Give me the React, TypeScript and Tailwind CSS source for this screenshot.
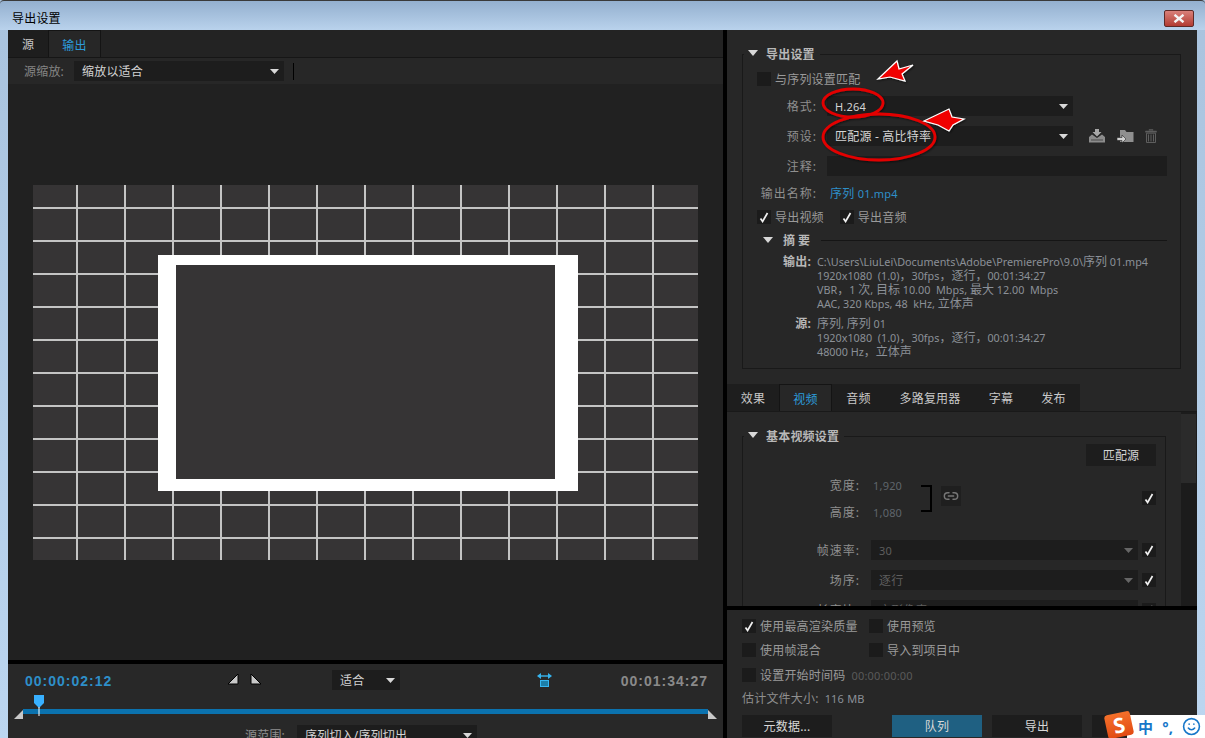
import { Link2, Smile } from 'lucide-react'
import type { ReactNode } from 'react'

const VERTICALS = [77, 125, 173, 221, 269, 317, 365, 413, 461, 509, 557, 605, 653]
const HORIZONTALS = [208, 241, 274, 307, 340, 373, 406, 439, 472, 505, 538]
const COMMA = '\uff0c'

function Caret({ dim = false }: { dim?: boolean }) {
  return (
    <svg width="9" height="5" viewBox="0 0 9 5" className="shrink-0">
      <polygon points="0,0 9,0 4.5,5" fill={dim ? '#666666' : '#d8d8d8'} />
    </svg>
  )
}

function Check({ on = false }: { on?: boolean }) {
  return (
    <div className="flex h-[14px] w-[14px] shrink-0 items-center justify-center bg-[#1b1b1b]">
      {on && (
        <svg width="10" height="11" viewBox="0 0 10 11">
          <path d="M1.5 6.5 L3.6 9.5 L8.5 1" fill="none" stroke="#f0f0f0" strokeWidth="1.7" />
        </svg>
      )}
    </div>
  )
}

function CheckLabel({ on, children, className = '' }: { on?: boolean; children: ReactNode; className?: string }) {
  return (
    <div className={`flex h-[14px] items-center ${className}`}>
      <Check on={on} />
      <span className="ml-[4px] whitespace-nowrap text-[#9a9a9a]">{children}</span>
    </div>
  )
}

function Select({ text, className, dim = false, small = false }: { text: string; className: string; dim?: boolean; small?: boolean }) {
  return (
    <div className={`flex h-5 items-center justify-between bg-[#1d1d1d] pl-[8px] pr-[5px] ${className}`}>
      <span className={`whitespace-nowrap ${small ? 'text-[11px]' : ''} ${dim ? 'text-[#5e5e5e]' : 'text-[#d4d4d4]'}`}>{text}</span>
      <Caret dim={dim} />
    </div>
  )
}

function FieldRow({ label, children }: { label: string; children: ReactNode }) {
  return (
    <div className="mt-[10px] flex items-center">
      <span className="w-[74px] whitespace-nowrap text-right tracking-[1px] text-[#8f8f8f]">{label}</span>
      <div className="ml-[10px] flex items-center">{children}</div>
    </div>
  )
}

function SectionTitle({ text }: { text: string }) {
  return (
    <div className="-mt-[10px] ml-[1px] flex h-[18px] w-fit items-center bg-[#272727] pl-[4px] pr-[5px]">
      <svg width="10" height="6" viewBox="0 0 10 6" className="-mt-[3px]">
        <polygon points="0,0 10,0 5,6" fill="#d8d8d8" />
      </svg>
      <span className="ml-[8px] font-bold text-[#b8b8b8]">{text}</span>
    </div>
  )
}

function Tab({ text, width, active = false }: { text: string; width: string; active?: boolean }) {
  return (
    <div
      className={`flex h-full items-center justify-center pt-[3px] ${width} ${
        active ? 'border-x border-t border-[#141414] bg-[#272727] text-[#2d9cdb]' : 'bg-[#1e1e1e] text-[#c8c8c8]'
      }`}
    >
      {text}
    </div>
  )
}

function Button({ text, className = 'bg-[#1d1d1d]' }: { text?: string; className?: string }) {
  return <div className={`flex h-[22px] w-[90px] shrink-0 items-center justify-center pt-[2px] text-[#d8d8d8] ${className}`}>{text}</div>
}

function VideoRow({ label, value, small = false }: { label: string; value: string; small?: boolean }) {
  return (
    <div className="mt-[10px] flex items-center">
      <span className="w-[117px] whitespace-nowrap text-right tracking-[1px] text-[#8f8f8f]">{label}</span>
      <Select text={value} dim small={small} className="ml-[11px] w-[267px]" />
      <div className="ml-[4px]">
        <Check on />
      </div>
    </div>
  )
}

function Preview() {
  return (
    <svg width="665" height="375" viewBox="33 185 665 375" className="ml-[25px] mt-[101px] block">
      <rect x="33" y="185" width="665" height="375" fill="#363435" />
      {VERTICALS.map((x) => (
        <rect key={x} x={x - 1} y="185" width="2" height="375" fill="#c4c4c4" />
      ))}
      {HORIZONTALS.map((y) => (
        <rect key={y} x="33" y={y - 1} width="665" height="2" fill="#c4c4c4" />
      ))}
      <rect x="158" y="255" width="420" height="236" fill="#ffffff" />
      <rect x="176" y="265" width="379" height="214" fill="#363435" />
    </svg>
  )
}

function Annotations() {
  return (
    <svg width="1205" height="738" viewBox="0 0 1205 738" className="pointer-events-none absolute left-0 top-0">
      <defs>
        <filter id="soft" x="-20%" y="-20%" width="140%" height="140%">
          <feDropShadow dx="1" dy="1" stdDeviation="1.2" floodColor="#000000" floodOpacity="0.6" />
        </filter>
      </defs>
      <g filter="url(#soft)">
        <ellipse cx="853" cy="103" rx="30" ry="14" fill="none" stroke="#e30000" strokeWidth="2.8" />
        <ellipse cx="879" cy="137" rx="56" ry="23" fill="none" stroke="#e30000" strokeWidth="2.8" />
        <polygon points="878,79 897,61 899,69 913,65 902,74 905,81 890,77" fill="#f00000" stroke="#ffffff" strokeWidth="1.2" />
        <polygon points="924,121 949,109 952,117 964,119 953,125 949,131 938,125" fill="#f00000" stroke="#ffffff" strokeWidth="1.2" />
      </g>
    </svg>
  )
}

// 요약 영역의 한자는 라틴 글자보다 크게 보인다
function Wide({ children }: { children: ReactNode }) {
  return <span className="text-[12px]">{children}</span>
}

export default function App() {
  return (
    <div className="relative flex h-[738px] w-[1205px] flex-col overflow-hidden bg-gradient-to-b from-[#a9c3de] to-[#bcd6f0] text-[12px] leading-[14px] tracking-[0.2px] [font-family:'Noto_Sans','Noto_Sans_CJK_SC',sans-serif] [&_span]:translate-y-px">
      {/* title bar */}
      <div className="flex h-[30px] shrink-0 items-start justify-between rounded-t-[4px] border-t border-[#3a3a3a] bg-gradient-to-b from-[#94b0cf] to-[#b9d2ec]">
        <span className="ml-[12px] mt-[10px] text-black">导出设置</span>
        <div className="mr-[11px] mt-[9px] flex h-[17px] w-[30px] items-center justify-center rounded-[2px] border border-[#5e2a28] bg-gradient-to-b from-[#d9807a] to-[#b23a32]">
          <svg width="12" height="9" viewBox="0 0 12 9">
            <path d="M1.5 0.8 L10.5 8.2 M10.5 0.8 L1.5 8.2" stroke="#f4f4f4" strokeWidth="2.4" />
          </svg>
        </div>
      </div>

      <div className="flex min-h-0 flex-1 px-[8px]">
        {/* left side */}
        <div className="flex w-[715px] shrink-0 flex-col bg-[#212121]">
          <div className="flex h-[28px] shrink-0 border-b border-[#161616] bg-[#232323]">
            <Tab text="源" width="w-[40px]" />
            <Tab text="输出" width="w-[53px]" active />
          </div>
          <div className="flex h-[26px] shrink-0 items-center bg-[#272727]">
            <span className="ml-[16px] w-[50px] whitespace-nowrap text-[#858585]">源缩放:</span>
            <Select text="缩放以适合" className="w-[210px]" />
            <div className="ml-[9px] h-[17px] w-px bg-black" />
          </div>
          <div className="min-h-0 flex-1">
            <Preview />
          </div>
          <div className="h-[4px] shrink-0 bg-black" />
          <div className="h-[74px] shrink-0 overflow-hidden bg-[#282828]">
            <div className="mt-[6px] flex h-5 items-center">
              <span className="ml-[17px] w-[90px] text-[14px] font-bold tracking-[1px] text-[#2e8fc9] [font-family:'Liberation_Sans',sans-serif]">00:00:02:12</span>
              <svg width="12" height="12" viewBox="0 0 12 12" className="-mt-[3px] ml-[112px]">
                <polygon points="11,1 11,11 1,11" fill="#c8c8c8" stroke="#000000" />
              </svg>
              <svg width="12" height="12" viewBox="0 0 12 12" className="-mt-[3px] ml-[11px]">
                <polygon points="1,1 1,11 11,11" fill="#c8c8c8" stroke="#000000" />
              </svg>
              <Select text="适合" className="ml-[70px] w-[68px]" />
              <svg width="15" height="14" viewBox="0 0 15 14" className="ml-[137px]">
                <path d="M3 3 H12" stroke="#35b5f0" strokeWidth="1.4" />
                <polygon points="0,3 4,0 4,6" fill="#35b5f0" />
                <polygon points="15,3 11,0 11,6" fill="#35b5f0" />
                <rect x="3.5" y="7.5" width="8" height="6" fill="#1c7ea8" stroke="#35b5f0" />
              </svg>
              <span className="ml-auto mr-[15px] text-[14px] font-bold tracking-[1px] text-[#8a8a8a] [font-family:'Liberation_Sans',sans-serif]">00:01:34:27</span>
            </div>
            <div className="relative ml-[15px] mt-[19px] h-[5px] w-[685px] bg-[#0b72ae]">
              <svg width="12" height="21" viewBox="0 0 12 21" className="absolute -top-[14px] left-[10px]">
                <polygon points="1,0 11,0 11,8 6,13 1,8" fill="#38b0ff" />
                <rect x="5.5" y="12" width="1" height="9" fill="#ffffff" />
              </svg>
              <svg width="9" height="9" viewBox="0 0 9 9" className="absolute -left-[9px] top-[1px]">
                <polygon points="9,0 9,9 0,9" fill="#c8c8c8" />
              </svg>
              <svg width="9" height="9" viewBox="0 0 9 9" className="absolute -right-[9px] top-[1px]">
                <polygon points="0,0 0,9 9,9" fill="#c8c8c8" />
              </svg>
            </div>
            <div className="mt-[11px] flex items-center">
              <span className="ml-[237px] w-[52px] whitespace-nowrap text-[#8f8f8f]">源范围:</span>
              <Select text="序列切入/序列切出" className="w-[180px]" />
            </div>
          </div>
        </div>

        <div className="w-[4px] shrink-0 bg-black" />

        {/* right side */}
        <div className="flex min-w-0 flex-1 flex-col bg-[#272727]">
          <div className="h-[354px] shrink-0 pl-[15px] pt-[24px]">
            <div className="h-[315px] w-[439px] border border-[#191919]">
              <SectionTitle text="导出设置" />
              <CheckLabel className="ml-[14px] mt-[9px]">与序列设置匹配</CheckLabel>
              <FieldRow label="格式:">
                <Select text="H.264" small className="w-[246px]" />
              </FieldRow>
              <FieldRow label="预设:">
                <Select text="匹配源 - 高比特率" className="w-[246px]" />
                <svg width="16" height="14" viewBox="0 0 16 14" className="ml-[16px]">
                  <path d="M6 0 H10 V3 H12.5 L8 7.5 L3.5 3 H6 Z" fill="#a8a8a8" />
                  <path d="M0 8 L3 5.5 L8 9 L13 5.5 L16 8 V13.5 H0 Z" fill="#8c8c8c" />
                  <rect x="2" y="10.5" width="12" height="1" fill="#4a4a4a" />
                </svg>
                <svg width="17" height="14" viewBox="0 0 17 14" className="ml-[12px]">
                  <path d="M3 1 H8 L9.5 3 H16.5 V13 H3 Z" fill="#8f8f8f" />
                  <path d="M0 8.5 H5 V6 L9 10 L5 14 V11.5 H0 Z" fill="#d0d0d0" stroke="#272727" strokeWidth="0.6" />
                </svg>
                <svg width="12" height="14" viewBox="0 0 12 14" className="ml-[11px]">
                  <path d="M4 1.5 V0.5 H8 V1.5 M0.5 2 H11.5 V3.2 H0.5 Z" fill="#5e5e5e" stroke="#5e5e5e" strokeWidth="0.5" />
                  <path d="M1.5 4.2 H10.5 V13.5 H1.5 Z M3.5 5.5 V12.5 M6 5.5 V12.5 M8.5 5.5 V12.5" fill="none" stroke="#5e5e5e" />
                </svg>
              </FieldRow>
              <FieldRow label="注释:">
                <div className="h-5 w-[340px] bg-[#1d1d1d]" />
              </FieldRow>
              <div className="mt-[9px] flex h-4 items-center">
                <span className="w-[74px] whitespace-nowrap text-right tracking-[1px] text-[#8f8f8f]">输出名称:</span>
                <span className="ml-[13px] text-[#2e8fc9]">
                  序列 <span className="text-[11px]">01.mp4</span>
                </span>
              </div>
              <div className="ml-[14px] mt-[9px] flex">
                <CheckLabel on>导出视频</CheckLabel>
                <CheckLabel on className="ml-[16px]">导出音频</CheckLabel>
              </div>
              <div className="ml-[20px] mt-[9px] flex h-[14px] items-center">
                <svg width="10" height="6" viewBox="0 0 10 6" className="-mt-[1px]">
                  <polygon points="0,0 10,0 5,6" fill="#d8d8d8" />
                </svg>
                <span className="ml-[10px] w-[38px] font-bold tracking-[3px] text-[#b8b8b8]">摘要</span>
                <div className="h-px w-[346px] bg-[#151515]" />
              </div>
              <div className="mt-[7px] flex">
                <span className="w-[68px] text-right font-bold text-[#b8b8b8]">输出:</span>
                <div className="ml-[6px] translate-y-px whitespace-pre text-[10.8px] tracking-normal text-[#8b9097]">
                  <div>C:\Users\LiuLei\Documents\Adobe\PremierePro\9.0\<Wide>序列</Wide> 01.mp4</div>
                  <div>1920x1080  (1.0)<Wide>{COMMA}</Wide>30fps<Wide>{COMMA}逐行{COMMA}</Wide>00:01:34:27</div>
                  <div>VBR<Wide>{COMMA}</Wide>1 <Wide>次</Wide>, <Wide>目标</Wide> 10.00  Mbps, <Wide>最大</Wide> 12.00  Mbps</div>
                  <div>AAC, 320 Kbps, 48  kHz, <Wide>立体声</Wide></div>
                </div>
              </div>
              <div className="mt-[6px] flex">
                <span className="w-[68px] text-right font-bold text-[#b8b8b8]">源:</span>
                <div className="ml-[6px] translate-y-px whitespace-pre text-[10.8px] tracking-normal text-[#8b9097]">
                  <div><Wide>序列</Wide>, <Wide>序列</Wide> 01</div>
                  <div>1920x1080  (1.0)<Wide>{COMMA}</Wide>30fps<Wide>{COMMA}逐行{COMMA}</Wide>00:01:34:27</div>
                  <div>48000 Hz<Wide>{COMMA}立体声</Wide></div>
                </div>
              </div>
            </div>
          </div>

          <div className="flex h-[27px] shrink-0">
            <Tab text="效果" width="w-[52px]" />
            <Tab text="视频" width="w-[53px]" active />
            <Tab text="音频" width="w-[53px]" />
            <Tab text="多路复用器" width="w-[90px]" />
            <Tab text="字幕" width="w-[52px]" />
            <Tab text="发布" width="w-[53px]" />
          </div>

          <div className="flex h-[195px] shrink-0 overflow-hidden border-t border-[#191919]">
            <div className="w-[454px] shrink-0 pl-[15px] pt-[24px]">
              <div className="h-[300px] w-[424px] border border-[#191919]">
                <SectionTitle text="基本视频设置" />
                <div className="-mt-px ml-auto mr-[9px] flex h-[22px] w-[70px] items-center justify-center bg-[#1d1d1d] pt-[2px] text-[#d4d4d4]">匹配源</div>
                <div className="mt-[11px] flex h-[43px]">
                  <div className="w-[178px] shrink-0">
                    <div className="flex h-4 items-center">
                      <span className="w-[117px] text-right tracking-[1px] text-[#8f8f8f]">宽度:</span>
                      <span className="ml-[13px] text-[11px] text-[#5f656b]">1,920</span>
                    </div>
                    <div className="mt-[11px] flex h-4 items-center">
                      <span className="w-[117px] text-right tracking-[1px] text-[#8f8f8f]">高度:</span>
                      <span className="ml-[13px] text-[11px] text-[#5f656b]">1,080</span>
                    </div>
                  </div>
                  <div className="mt-[8px] h-[27px] w-[11px] border-y-2 border-r-2 border-black" />
                  <div className="ml-[9px] mt-[9px] flex h-5 w-5 items-center justify-center bg-[#1f1f1f]">
                    <Link2 size={16} color="#777777" strokeWidth={2.2} />
                  </div>
                  <div className="ml-auto mr-[9px] mt-[14px]">
                    <Check on />
                  </div>
                </div>
                <div className="mt-[20px]">
                  <VideoRow label="帧速率:" value="30" small />
                  <VideoRow label="场序:" value="逐行" />
                  <VideoRow label="长宽比:" value="方形像素 (1.0)" />
                </div>
              </div>
            </div>
            <div className="ml-auto w-[16px] bg-[#1c1c1c] pt-[2px]">
              <div className="h-[69px] w-[15px] bg-[#2b2b2b]" />
            </div>
          </div>

          <div className="h-[4px] shrink-0 bg-black" />

          <div className="min-h-0 flex-1 pl-[15px] pt-[9px]">
            <div className="flex">
              <CheckLabel on className="w-[127px]">使用最高渲染质量</CheckLabel>
              <CheckLabel>使用预览</CheckLabel>
            </div>
            <div className="mt-[10px] flex">
              <CheckLabel className="w-[127px]">使用帧混合</CheckLabel>
              <CheckLabel>导入到项目中</CheckLabel>
            </div>
            <div className="mt-[11px] flex items-center">
              <CheckLabel>设置开始时间码</CheckLabel>
              <span className="ml-[6px] text-[11px] text-[#5a5a5a]">00:00:00:00</span>
            </div>
            <div className="mt-[9px] flex h-[14px] items-center">
              <span className="text-[#8f8f8f]">估计文件大小:</span>
              <span className="ml-[6px] text-[11px] text-[#8b9097]">116 MB</span>
            </div>
            <div className="mt-[10px] flex">
              <Button text="元数据..." />
              <Button text="队列" className="ml-[60px] bg-[#1f6082]" />
              <Button text="导出" className="ml-[10px] bg-[#1d1d1d]" />
              <Button className="ml-[10px] bg-[#1d1d1d]" />
            </div>
          </div>
        </div>
      </div>

      <Annotations />

      {/* input method bar */}
      <div className="absolute bottom-0 right-0 flex h-[23px] w-[78px] items-center bg-white pl-[11px]">
        <div className="text-[15px] font-bold text-[#1777c9]">中</div>
        <div className="ml-[9px] text-[15px] font-bold text-[#1777c9]">°,</div>
        <Smile size={19} color="#1777c9" className="ml-[9px]" />
      </div>
      <div className="absolute bottom-[1px] right-[73px] flex h-[24px] w-[26px] -rotate-[12deg] items-center justify-center rounded-[3px] bg-gradient-to-b from-[#f4702a] to-[#e24a12] text-[21px] font-bold text-white">
        S
      </div>
    </div>
  )
}
